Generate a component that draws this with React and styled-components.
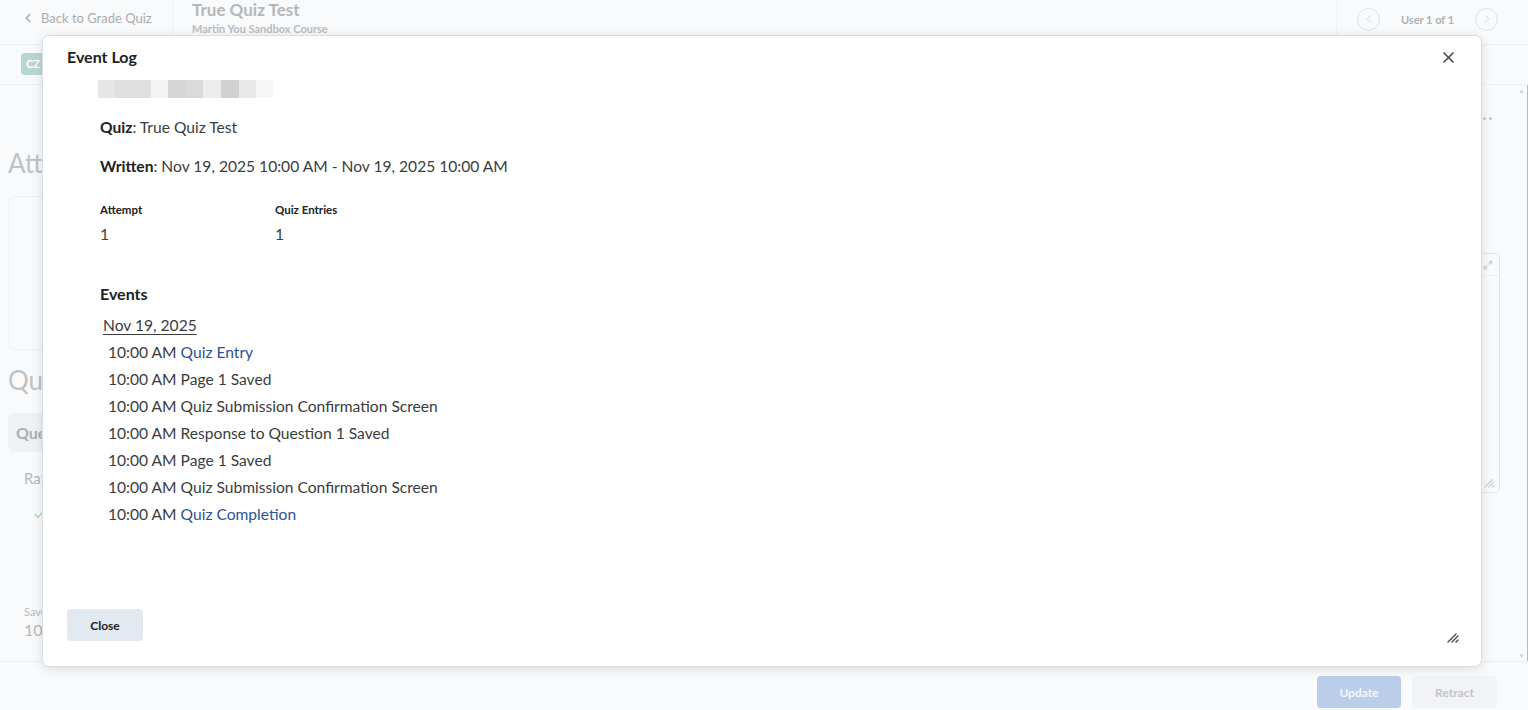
import React from "react";
import styled, { createGlobalStyle } from "styled-components";
import { ChevronLeft, ChevronRight, Check, Maximize2 } from "lucide-react";

const GlobalStyle = createGlobalStyle`
  html, body { margin: 0; padding: 0; }
  body {
    font-family: Lato, "Noto Sans", "Liberation Sans", sans-serif;
    background: #f9fafb;
    color: #494c4e;
  }
  * { box-sizing: border-box; }
`;

/* ---------- page behind the dialog (dimmed) ---------- */

const Page = styled.div`
  position: relative;
  width: 100vw;
  height: 100vh;
  overflow: hidden;
  display: flex;
  flex-direction: column;
  background: #f9fafb;
`;

const TopBar = styled.header`
  height: 45px;
  flex: none;
  display: flex;
  align-items: stretch;
  border-bottom: 1px solid #eef0f2;
`;

const BackLink = styled.div`
  width: 173px;
  display: flex;
  align-items: center;
  gap: 6px;
  padding-left: 21px;
  padding-bottom: 8px;
  font-size: 13px;
  color: #a9acaf;
  border-right: 1px solid #eef0f2;
`;

const TitleBlock = styled.div`
  flex: 1;
  padding-left: 19px;
  display: flex;
  flex-direction: column;
`;

const PageTitle = styled.div`
  font-size: 17px;
  font-weight: 700;
  line-height: 20px;
  color: #b4b7ba;
`;

const PageSubtitle = styled.div`
  margin-top: 2px;
  font-size: 11px;
  font-weight: 700;
  line-height: 14px;
  color: #babdc0;
`;

const UserNav = styled.div`
  width: 192px;
  display: flex;
  align-items: center;
  padding: 0 30px 6px 20px;
  border-left: 1px solid #eef0f2;
`;

const RoundButton = styled.span`
  width: 23px;
  height: 23px;
  border-radius: 50%;
  border: 1.5px solid #dcdee1;
  display: flex;
  align-items: center;
  justify-content: center;
  color: #cfd2d5;
`;

const UserLabel = styled.span`
  flex: 1;
  text-align: center;
  font-size: 11px;
  font-weight: 700;
  color: #aeb1b4;
`;

const SubBar = styled.div`
  height: 40px;
  flex: none;
  display: flex;
  align-items: center;
  padding: 0 0 2px 21px;
  border-bottom: 1px solid #eef0f2;
`;

const Initials = styled.span`
  width: 24px;
  height: 22px;
  border-radius: 4px;
  background: #b9d7d0;
  color: #fff;
  font-size: 11px;
  font-weight: 700;
  display: flex;
  align-items: center;
  justify-content: center;
`;

const Body = styled.div`
  flex: 1;
  display: flex;
  min-height: 0;
`;

const Main = styled.main`
  flex: 1;
  display: grid;
  grid-template-columns: 1fr 700px;
  column-gap: 40px;
  padding: 0 16px 0 8px;
  overflow: hidden;
`;

const Column = styled.section`
  display: flex;
  flex-direction: column;
  min-width: 0;
`;

const SectionHeading = styled.h2`
  margin: ${(p) => p.$top}px 0 0;
  font-size: 26px;
  font-weight: 400;
  line-height: 32px;
  color: #bfc2c5;
`;

const SummaryCard = styled.div`
  margin-top: 17px;
  height: 154px;
  border: 1px solid #eef0f2;
  border-radius: 8px;
`;

const Tab = styled.div`
  margin-top: 17px;
  height: 39px;
  width: 200px;
  border-radius: 6px;
  background: #eff1f4;
  display: flex;
  align-items: center;
  padding-left: 8px;
  font-size: 16px;
  font-weight: 700;
  color: #abaeb1;
`;

const Faint = styled.div`
  margin: ${(p) => p.$top}px 0 0 16px;
  font-size: ${(p) => p.$size}px;
  line-height: ${(p) => p.$line}px;
  color: #b4b7ba;
`;

const Tick = styled.div`
  margin: 20px 0 0 25px;
  color: #a5d6b8;
  display: flex;
`;

const MenuDots = styled.div`
  margin-top: 32px;
  align-self: flex-end;
  margin-right: 8px;
  display: flex;
  gap: 3px;
`;

const Dot = styled.span`
  width: 3px;
  height: 3px;
  border-radius: 50%;
  background: #c4c7ca;
`;

const FeedbackBox = styled.div`
  margin-top: 133px;
  height: 240px;
  border: 1px solid #e2e4e7;
  border-radius: 5px;
  display: flex;
  flex-direction: column;
`;

const FeedbackTools = styled.div`
  height: 11px;
  margin-top: 6px;
  padding-right: 6px;
  display: flex;
  justify-content: flex-end;
  color: #c9ccce;
  border-bottom: 1px solid #eff0f2;
  box-sizing: content-box;
  padding-bottom: 4px;
`;

const GripCorner = styled.div`
  margin-top: auto;
  align-self: flex-end;
  padding: 0 4px 4px 0;
  display: flex;
`;

const ScrollTrack = styled.div`
  width: 12px;
  flex: none;
  display: flex;
  flex-direction: column;
  justify-content: space-between;
  align-items: center;
  padding: 2px 0;
  border-right: 1px solid #b9bbbe;
  font-size: 6px;
  color: #c9cbce;
`;

const Footer = styled.footer`
  height: 49px;
  flex: none;
  display: flex;
  justify-content: flex-end;
  gap: 11px;
  padding: 14px 31px 0 0;
  border-top: 1px solid #eceef1;
`;

const FooterButton = styled.span`
  width: ${(p) => p.$w}px;
  height: 32px;
  border-radius: 4px;
  background: ${(p) => (p.$primary ? "#bccde9" : "#f1f3f6")};
  color: ${(p) => (p.$primary ? "#f4f7fc" : "#c2c5c8")};
  font-size: 12px;
  font-weight: 700;
  display: flex;
  align-items: center;
  justify-content: center;
`;

/* ---------- event log dialog ---------- */

const Dialog = styled.div`
  position: absolute;
  left: 42px;
  top: 35px;
  width: 1440px;
  height: 632px;
  background: #fff;
  border: 1px solid #d9dee4;
  border-radius: 7px;
  box-shadow: 0 2px 12px rgba(0, 0, 0, 0.12);
  display: flex;
  flex-direction: column;
`;

const DialogHeader = styled.div`
  display: flex;
  align-items: center;
  justify-content: space-between;
  padding: 11px 27px 0 24px;
`;

const DialogTitle = styled.h2`
  margin: 0;
  font-size: 16px;
  font-weight: 700;
  line-height: 20px;
  color: #202122;
`;

const CloseIcon = styled.button`
  border: 0;
  background: none;
  padding: 0;
  display: flex;
  color: #494c4e;
  cursor: pointer;
`;

const DialogBody = styled.div`
  flex: 1;
  padding: 13px 24px 0 55px;
  color: #3a3c3e;
  font-size: 15.6px;
`;

const Redacted = styled.div`
  display: flex;
  height: 18px;
`;

const Tile = styled.span`
  width: ${(p) => p.$w}px;
  background: ${(p) => p.$shade};
`;

const InfoLine = styled.p`
  margin: ${(p) => p.$top}px 0 0 2px;
  line-height: 24px;
`;

const Label = styled.b`
  font-weight: 700;
  color: #202122;
`;

const Stats = styled.div`
  margin: 24px 0 0 2px;
  display: grid;
  grid-template-columns: 175px 175px;
`;

const StatLabel = styled.div`
  font-size: 11.5px;
  font-weight: 700;
  line-height: 16px;
  color: #202122;
`;

const StatValue = styled.div`
  margin-top: 6px;
  line-height: 20px;
`;

const EventsHeading = styled.h3`
  margin: 38px 0 0 2px;
  font-size: 16px;
  font-weight: 700;
  line-height: 24px;
  color: #202122;
`;

const DayLabel = styled.div`
  margin: 7px 0 2px 5px;
  line-height: 24px;
  text-decoration: underline;
  text-underline-offset: 3px;
  text-decoration-thickness: 1px;
`;

const EventList = styled.ul`
  list-style: none;
  margin: 0;
  padding: 0 0 0 10px;
`;

const EventRow = styled.li`
  line-height: 27px;
  white-space: nowrap;
`;

const EventName = styled.span`
  color: ${(p) => (p.$link ? "#2d5198" : "inherit")};
  cursor: ${(p) => (p.$link ? "pointer" : "default")};
`;

const DialogFooter = styled.div`
  padding: 0 24px 25px;
  display: flex;
`;

const SecondaryButton = styled.button`
  width: 76px;
  height: 32px;
  border: 0;
  border-radius: 4px;
  background: #e3e9f1;
  font-family: inherit;
  font-size: 12px;
  font-weight: 700;
  color: #202122;
  cursor: pointer;
`;

const ResizeGrip = styled.span`
  position: absolute;
  right: 22px;
  bottom: 23px;
  display: flex;
  color: #494c4e;
`;

const redaction = [
  [17, "#e6e6e6"],
  [36, "#e0e0e0"],
  [17, "#f3f3f3"],
  [18, "#d6d6d6"],
  [17, "#dadada"],
  [18, "#ececec"],
  [18, "#d1d1d1"],
  [17, "#e8e8e8"],
  [17, "#f7f7f7"],
];

const events = [
  { name: "Quiz Entry", link: true },
  { name: "Page 1 Saved" },
  { name: "Quiz Submission Confirmation Screen" },
  { name: "Response to Question 1 Saved" },
  { name: "Page 1 Saved" },
  { name: "Quiz Submission Confirmation Screen" },
  { name: "Quiz Completion", link: true },
];

function GripLines({ color = "currentColor", size = 12 }) {
  return (
    <svg width={size} height={size} viewBox="0 0 12 12" fill="none">
      <path d="M1 11 L9 3 M5 11 L11 5 M9 11 L11 9" stroke={color} strokeWidth="1.4" strokeLinecap="round" />
    </svg>
  );
}

export default function App() {
  return (
    <>
      <GlobalStyle />
      <Page>
        <TopBar>
          <BackLink>
            <ChevronLeft size={14} strokeWidth={3} color="#a9acaf" />
            Back to Grade Quiz
          </BackLink>
          <TitleBlock>
            <PageTitle>True Quiz Test</PageTitle>
            <PageSubtitle>Martin You Sandbox Course</PageSubtitle>
          </TitleBlock>
          <UserNav>
            <RoundButton>
              <ChevronLeft size={14} strokeWidth={1.5} />
            </RoundButton>
            <UserLabel>User 1 of 1</UserLabel>
            <RoundButton>
              <ChevronRight size={14} strokeWidth={1.5} />
            </RoundButton>
          </UserNav>
        </TopBar>

        <SubBar>
          <Initials>CZ</Initials>
        </SubBar>

        <Body>
          <Main>
            <Column>
              <SectionHeading $top={62}>Attempt 1</SectionHeading>
              <SummaryCard />
              <SectionHeading $top={14}>Questions</SectionHeading>
              <Tab>Question 1</Tab>
              <Faint $top={16} $size={15} $line={20}>Rationale</Faint>
              <Tick>
                <Check size={13} strokeWidth={2.5} />
              </Tick>
              <Faint $top={84} $size={11} $line={14}>Saved</Faint>
              <Faint $top={1} $size={16} $line={20}>10:00 AM</Faint>
            </Column>
            <Column>
              <MenuDots>
                <Dot />
                <Dot />
                <Dot />
              </MenuDots>
              <FeedbackBox>
                <FeedbackTools>
                  <Maximize2 size={10} strokeWidth={2.5} />
                </FeedbackTools>
                <GripCorner>
                  <GripLines color="#c9ccce" size={11} />
                </GripCorner>
              </FeedbackBox>
            </Column>
          </Main>
          <ScrollTrack>
            <span>▲</span>
            <span>▼</span>
          </ScrollTrack>
        </Body>

        <Footer>
          <FooterButton $primary $w={84}>Update</FooterButton>
          <FooterButton $w={85}>Retract</FooterButton>
        </Footer>

        <Dialog role="dialog" aria-label="Event Log">
          <DialogHeader>
            <DialogTitle>Event Log</DialogTitle>
            <CloseIcon aria-label="Close dialog">
              <svg width="11" height="11" viewBox="0 0 11 11">
                <path d="M1 1 L10 10 M10 1 L1 10" stroke="currentColor" strokeWidth="1.7" strokeLinecap="round" />
              </svg>
            </CloseIcon>
          </DialogHeader>

          <DialogBody>
            <Redacted>
              {redaction.map(([w, shade], i) => (
                <Tile key={i} $w={w} $shade={shade} />
              ))}
            </Redacted>

            <InfoLine $top={17}>
              <Label>Quiz</Label>: True Quiz Test
            </InfoLine>
            <InfoLine $top={15}>
              <Label>Written</Label>: Nov 19, 2025 10:00 AM - Nov 19, 2025 10:00 AM
            </InfoLine>

            <Stats>
              <div>
                <StatLabel>Attempt</StatLabel>
                <StatValue>1</StatValue>
              </div>
              <div>
                <StatLabel>Quiz Entries</StatLabel>
                <StatValue>1</StatValue>
              </div>
            </Stats>

            <EventsHeading>Events</EventsHeading>
            <DayLabel>Nov 19, 2025</DayLabel>
            <EventList>
              {events.map((e, i) => (
                <EventRow key={i}>
                  10:00 AM <EventName $link={e.link}>{e.name}</EventName>
                </EventRow>
              ))}
            </EventList>
          </DialogBody>

          <DialogFooter>
            <SecondaryButton>Close</SecondaryButton>
          </DialogFooter>

          <ResizeGrip>
            <GripLines size={12} />
          </ResizeGrip>
        </Dialog>
      </Page>
    </>
  );
}
